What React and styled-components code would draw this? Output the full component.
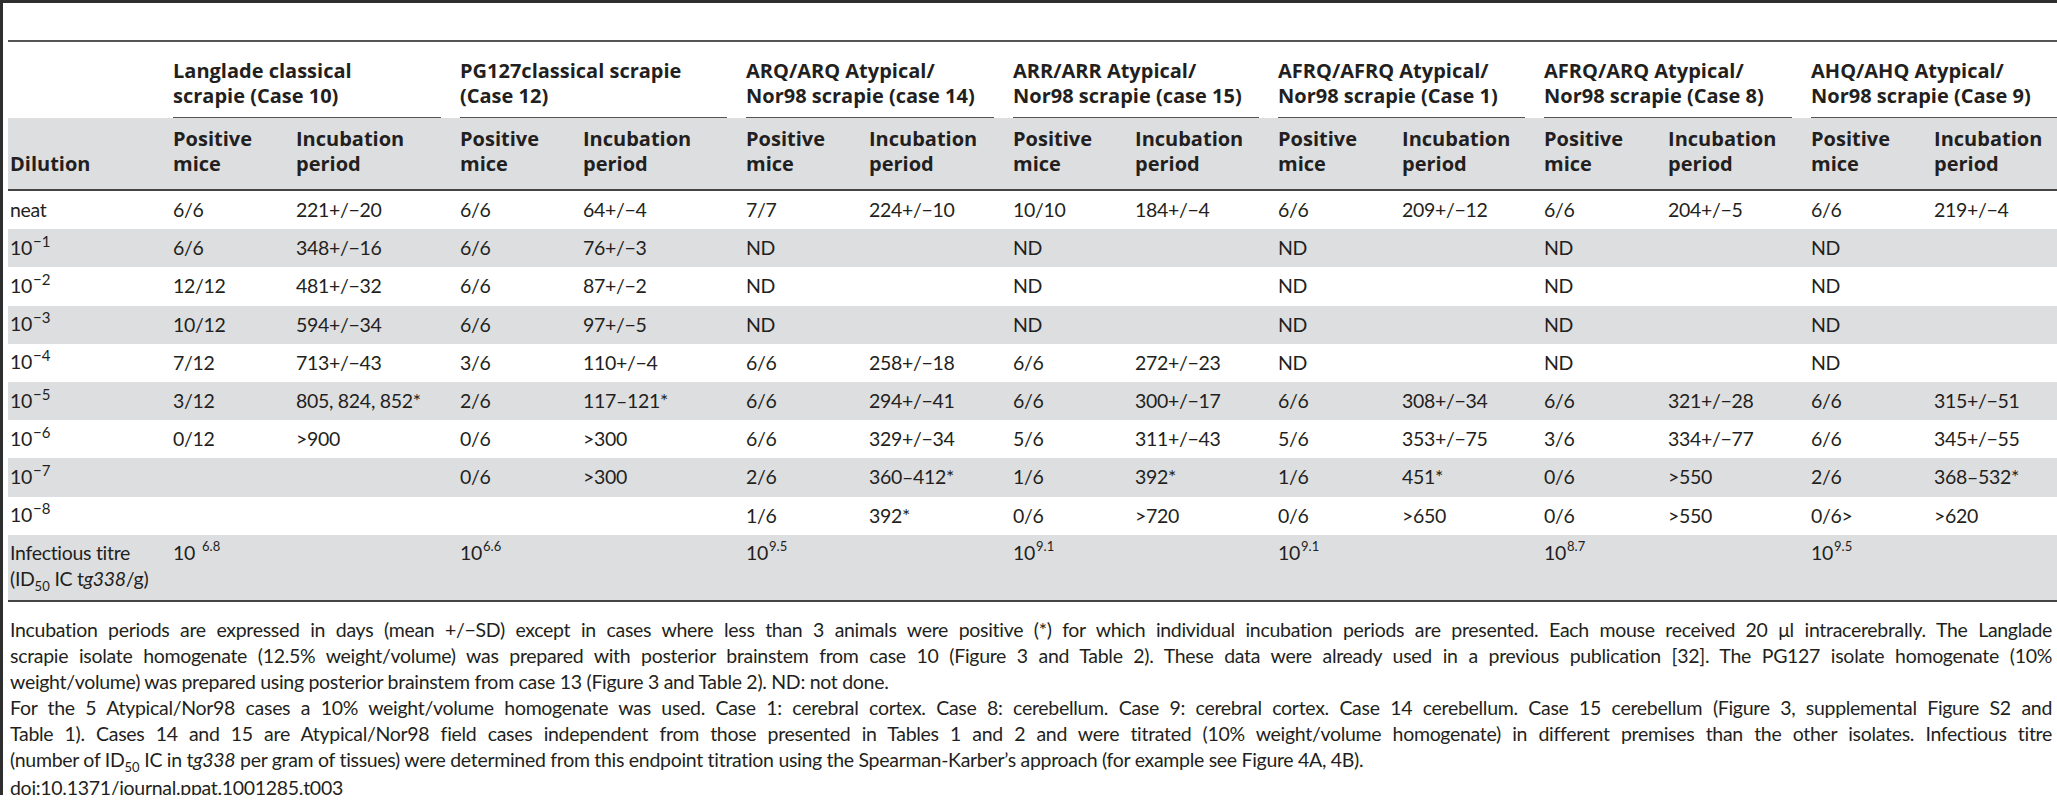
import styled, { createGlobalStyle } from 'styled-components';

const GlobalStyle = createGlobalStyle`
  html, body {
    margin: 0;
    padding: 0;
    background: #fff;
    overflow: hidden;
  }
  body {
    font-family: Lato, 'Liberation Sans', sans-serif;
    color: #231f20;
  }
`;

const widths = [163, 123, 164, 123, 163, 123, 144, 122, 143, 124, 142, 124, 143, 123, 160];

const groups = [
  ['Langlade classical', 'scrapie (Case 10)'],
  ['PG127classical scrapie', '(Case 12)'],
  ['ARQ/ARQ Atypical/', 'Nor98 scrapie (case 14)'],
  ['ARR/ARR Atypical/', 'Nor98 scrapie (case 15)'],
  ['AFRQ/AFRQ Atypical/', 'Nor98 scrapie (Case 1)'],
  ['AFRQ/ARQ Atypical/', 'Nor98 scrapie (Case 8)'],
  ['AHQ/AHQ Atypical/', 'Nor98 scrapie (Case 9)'],
];

const rows = [
  { exp: null, cells: ['6/6', '221+/−20', '6/6', '64+/−4', '7/7', '224+/−10', '10/10', '184+/−4', '6/6', '209+/−12', '6/6', '204+/−5', '6/6', '219+/−4'] },
  { exp: 1, cells: ['6/6', '348+/−16', '6/6', '76+/−3', 'ND', '', 'ND', '', 'ND', '', 'ND', '', 'ND', ''] },
  { exp: 2, cells: ['12/12', '481+/−32', '6/6', '87+/−2', 'ND', '', 'ND', '', 'ND', '', 'ND', '', 'ND', ''] },
  { exp: 3, cells: ['10/12', '594+/−34', '6/6', '97+/−5', 'ND', '', 'ND', '', 'ND', '', 'ND', '', 'ND', ''] },
  { exp: 4, cells: ['7/12', '713+/−43', '3/6', '110+/−4', '6/6', '258+/−18', '6/6', '272+/−23', 'ND', '', 'ND', '', 'ND', ''] },
  { exp: 5, cells: ['3/12', '805, 824, 852*', '2/6', '117–121*', '6/6', '294+/−41', '6/6', '300+/−17', '6/6', '308+/−34', '6/6', '321+/−28', '6/6', '315+/−51'] },
  { exp: 6, cells: ['0/12', '>900', '0/6', '>300', '6/6', '329+/−34', '5/6', '311+/−43', '5/6', '353+/−75', '3/6', '334+/−77', '6/6', '345+/−55'] },
  { exp: 7, cells: ['', '', '0/6', '>300', '2/6', '360–412*', '1/6', '392*', '1/6', '451*', '0/6', '>550', '2/6', '368–532*'] },
  { exp: 8, cells: ['', '', '', '', '1/6', '392*', '0/6', '>720', '0/6', '>650', '0/6', '>550', '0/6>', '>620'] },
];

const titres = [['6.8', true], ['6.6'], ['9.5'], ['9.1'], ['9.1'], ['8.7'], ['9.5']];

const Frame = styled.div`
  width: 2057px;
  height: 795px;
  box-sizing: border-box;
  border-top: 3px solid #2e2e2e;
  border-left: 3px solid #2e2e2e;
  padding: 37px 0 0 5px;
`;

const Table = styled.table`
  border-collapse: collapse;
  table-layout: fixed;
  width: ${widths.reduce((a, b) => a + b, 0)}px;
  border-top: 2px solid #555;
  border-bottom: 2px solid #444;
`;

const GroupCell = styled.th`
  height: 76px;
  padding: 0 17px 0 2px;
  vertical-align: bottom;
  text-align: left;
`;

const GroupLabel = styled.div`
  font-family: 'Open Sans', 'Noto Sans', sans-serif;
  font-weight: 700;
  font-size: 20px;
  line-height: 25px;
  white-space: nowrap;
  padding-bottom: 9px;
  border-bottom: 1.5px solid #555;
`;

const HeadRow = styled.tr`
  background: #dddee0;
  border-bottom: 2px solid #444;
`;

const HeadCell = styled.th`
  height: 58px;
  padding: 0 17px 13px 2px;
  vertical-align: bottom;
  text-align: left;
  font-family: 'Open Sans', 'Noto Sans', sans-serif;
  font-weight: 700;
  font-size: 20px;
  line-height: 25px;
  white-space: nowrap;
`;

const Row = styled.tr`
  background: ${(p) => (p.$shaded ? '#dddee0' : '#fff')};
`;

const Cell = styled.td`
  height: ${(p) => (p.$tall ? '60px' : '38.2px')};
  padding: ${(p) => (p.$tall ? '5px 17px 0 2px' : '0 17px 0 2px')};
  vertical-align: ${(p) => (p.$tall ? 'top' : 'middle')};
  font-size: 19.5px;
  letter-spacing: -0.3px;
  line-height: 26px;
  white-space: nowrap;
`;

const Sup = styled.span`
  font-size: ${(p) => (p.$small ? '13px' : '15px')};
  letter-spacing: 0;
  position: relative;
  top: ${(p) => (p.$small ? '-9px' : '-8px')};
  margin-left: ${(p) => (p.$gap ? '7px' : '1px')};
`;

const Sub = styled.span`
  font-size: 13px;
  letter-spacing: 0;
  position: relative;
  top: 5px;
`;

const Notes = styled.div`
  margin-top: 15px;
  padding: 0 5px 0 2px;
  font-size: 19.5px;
  letter-spacing: -0.3px;
  line-height: 26px;
`;

const NoteLine = styled.div`
  white-space: nowrap;
  text-align: ${(p) => (p.$justify ? 'justify' : 'left')};
  text-align-last: ${(p) => (p.$justify ? 'justify' : 'left')};
`;

const Ten = ({ exp, gap, small }) => (
  <>
    10
    <Sup $gap={gap} $small={small}>
      {exp}
    </Sup>
  </>
);

export default function App() {
  return (
    <>
      <GlobalStyle />
      <Frame>
        <Table>
          <colgroup>
            {widths.map((w, i) => (
              <col key={i} style={{ width: w }} />
            ))}
          </colgroup>
          <thead>
            <tr>
              <GroupCell />
              {groups.map(([a, b]) => (
                <GroupCell key={a + b} colSpan={2}>
                  <GroupLabel>
                    {a}
                    <br />
                    {b}
                  </GroupLabel>
                </GroupCell>
              ))}
            </tr>
            <HeadRow>
              <HeadCell>Dilution</HeadCell>
              {groups.map(([a]) => [
                <HeadCell key={a + 'p'}>
                  Positive
                  <br />
                  mice
                </HeadCell>,
                <HeadCell key={a + 'i'}>
                  Incubation
                  <br />
                  period
                </HeadCell>,
              ])}
            </HeadRow>
          </thead>
          <tbody>
            {rows.map((r, i) => (
              <Row key={i} $shaded={i % 2 === 1}>
                <Cell>{r.exp === null ? 'neat' : <Ten exp={`−${r.exp}`} />}</Cell>
                {r.cells.map((c, j) => (
                  <Cell key={j}>{c}</Cell>
                ))}
              </Row>
            ))}
            <Row $shaded>
              <Cell $tall>
                Infectious titre
                <br />
                (ID<Sub>50</Sub> IC t<i>g338</i>/g)
              </Cell>
              {titres.map(([e, gap], j) => [
                <Cell $tall key={j + 'a'}>
                  <Ten exp={e} gap={gap} small />
                </Cell>,
                <Cell $tall key={j + 'b'} />,
              ])}
            </Row>
          </tbody>
        </Table>
        <Notes>
          <NoteLine $justify>
            Incubation periods are expressed in days (mean +/−SD) except in cases where less than 3 animals were positive (*) for which individual incubation periods are presented. Each mouse received 20 μl intracerebrally. The Langlade
          </NoteLine>
          <NoteLine $justify>
            scrapie isolate homogenate (12.5% weight/volume) was prepared with posterior brainstem from case 10 (Figure 3 and Table 2). These data were already used in a previous publication [32]. The PG127 isolate homogenate (10%
          </NoteLine>
          <NoteLine>
            weight/volume) was prepared using posterior brainstem from case 13 (Figure 3 and Table 2). ND: not done.
          </NoteLine>
          <NoteLine $justify>
            For the 5 Atypical/Nor98 cases a 10% weight/volume homogenate was used. Case 1: cerebral cortex. Case 8: cerebellum. Case 9: cerebral cortex. Case 14 cerebellum. Case 15 cerebellum (Figure 3, supplemental Figure S2 and
          </NoteLine>
          <NoteLine $justify>
            Table 1). Cases 14 and 15 are Atypical/Nor98 field cases independent from those presented in Tables 1 and 2 and were titrated (10% weight/volume homogenate) in different premises than the other isolates. Infectious titre
          </NoteLine>
          <NoteLine>
            (number of ID<Sub>50</Sub> IC in t<i>g338</i> per gram of tissues) were determined from this endpoint titration using the Spearman-Karber’s approach (for example see Figure 4A, 4B).
          </NoteLine>
          <NoteLine>doi:10.1371/journal.ppat.1001285.t003</NoteLine>
        </Notes>
      </Frame>
    </>
  );
}
